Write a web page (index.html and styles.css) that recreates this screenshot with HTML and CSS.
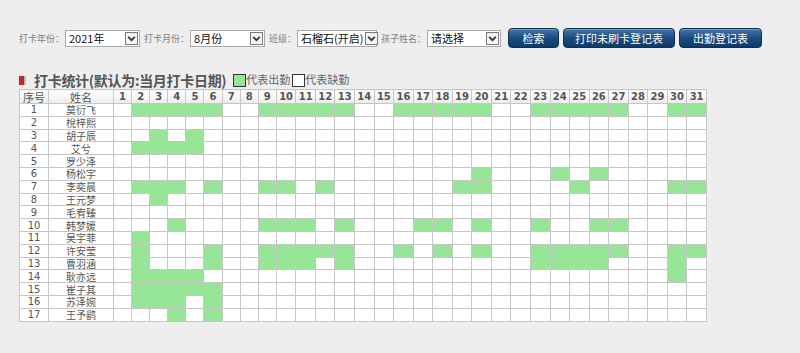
FILE: index.html
```html
<!DOCTYPE html>
<html lang="zh-CN">
<head>
    <meta charset="UTF-8">
    <title>打卡统计</title>
    <link rel="stylesheet" href="styles.css">
</head>
<body>
    <!-- 查询条件 -->
    <div class="toolbar">
        <span class="label">打卡年份：</span>
        <div class="select w-year"><span>2021年</span><i class="arrow"><svg viewBox="0 0 10 10"><path d="M2 3.5 L5 6.5 L8 3.5" /></svg></i></div>
        <span class="label">打卡月份：</span>
        <div class="select w-month"><span>8月份</span><i class="arrow"><svg viewBox="0 0 10 10"><path d="M2 3.5 L5 6.5 L8 3.5" /></svg></i></div>
        <span class="label">班级：</span>
        <div class="select w-class"><span>石榴石(开启)</span><i class="arrow"><svg viewBox="0 0 10 10"><path d="M2 3.5 L5 6.5 L8 3.5" /></svg></i></div>
        <span class="label">孩子姓名：</span>
        <div class="select w-child"><span>请选择</span><i class="arrow"><svg viewBox="0 0 10 10"><path d="M2 3.5 L5 6.5 L8 3.5" /></svg></i></div>
        <button class="btn btn-search">检索</button>
        <button class="btn btn-print">打印未刷卡登记表</button>
        <button class="btn btn-attend">出勤登记表</button>
    </div>

    <!-- 标题与图例 -->
    <div class="title-row">
        <span class="title-mark"></span>
        <h3>打卡统计(默认为:当月打卡日期)</h3>
        <span class="legend"><i class="box on"></i>代表出勤</span>
        <span class="legend"><i class="box"></i>代表缺勤</span>
    </div>

    <table class="stat">
        <colgroup id="cols"></colgroup>
        <thead><tr id="head"></tr></thead>
        <tbody id="rows"></tbody>
    </table>

    <script>
        var kids = [
            ["莫衍飞", [2,3,4,5,6,9,10,11,12,13,16,17,18,19,20,23,24,25,26,27,30,31]],
            ["梲梓熙", []],
            ["胡子辰", [3,5]],
            ["艾兮", [2,3,4,5]],
            ["罗少泽", []],
            ["杨松宇", [20,24,26]],
            ["李奕晨", [2,3,4,6,9,10,12,19,20,25,30,31]],
            ["王元梦", [3]],
            ["毛宥臻", []],
            ["韩梦媛", [4,9,10,11,13,17,18,20,23,26,27]],
            ["吴宇菲", [2]],
            ["许安莹", [2,6,9,10,11,12,13,16,18,20,23,24,25,26,27,30,31]],
            ["曹羽涵", [2,6,9,10,11,13,23,24,25,26,30]],
            ["耿亦远", [2,3,4,5,30]],
            ["崔子其", [2,3,4,5,6]],
            ["苏泽婉", [2,3,4,6]],
            ["王予鹞", [4,6]]
        ];

        var cols = '<col style="width:29px"><col style="width:65px">';
        var head = '<th class="plain">序号</th><th class="plain">姓名</th>';
        for (var d = 1; d <= 31; d++) {
            cols += '<col style="width:' + (d < 10 ? 18.1 : 19.55) + 'px">';
            head += '<th>' + d + '</th>';
        }
        document.getElementById("cols").innerHTML = cols;
        document.getElementById("head").innerHTML = head;

        var html = "";
        kids.forEach(function (k, i) {
            html += '<tr><td class="num">' + (i + 1) + '</td><td class="name">' + k[0] + '</td>';
            for (var d = 1; d <= 31; d++) {
                html += k[1].indexOf(d) >= 0 ? '<td class="on"></td>' : '<td></td>';
            }
            html += '</tr>';
        });
        document.getElementById("rows").innerHTML = html;
    </script>
</body>
</html>
```

FILE: styles.css
```css
/* 页面 */
body {
    margin: 0;
    background: #eeeeee;
    font-family: "Noto Sans CJK SC", sans-serif;
    color: #555;
}

/* 查询条件 */
.toolbar {
    display: flex;
    align-items: center;
    padding: 28px 0 0 19px;
    height: 20px;
}

.label {
    font-size: 9px;
    color: #808080;
    margin-right: 1px;
    white-space: nowrap;
}

.select {
    display: flex;
    align-items: center;
    justify-content: space-between;
    height: 17px;
    box-sizing: border-box;
    border: 1px solid #a9a9a9;
    background: #fff;
    margin-right: 4px;
    padding-left: 3px;
}

.select span {
    font-size: 11px;
    color: #111;
    white-space: nowrap;
}

.select .arrow {
    width: 13px;
    height: 13px;
    box-sizing: border-box;
    border: 1px solid #7a7a7a;
    margin-right: 1px;
    background: #f4f4f4;
    display: flex;
}

.select .arrow svg {
    width: 11px;
    height: 11px;
    fill: none;
    stroke: #333;
    stroke-width: 1.6;
}

.w-year { width: 75px; }
.w-month { width: 75px; }
.w-class { width: 80px; }
.w-child { width: 74px; }
.w-class span { margin-right: 2px; }

.btn {
    height: 20px;
    padding: 0;
    margin-left: 4px;
    border: 1px solid #0b2f55;
    border-radius: 4px;
    background: linear-gradient(#4677ab, #1b4c80 50%, #0e3a68);
    color: #fff;
    font-family: "Noto Sans CJK SC", sans-serif;
    font-size: 11px;
    box-shadow: inset 0 1px 0 rgba(255, 255, 255, 0.3);
}

.btn-search { width: 51px; margin-left: 3px; }
.btn-print { width: 112px; }
.btn-attend { width: 83px; }

/* 标题 */
.title-row {
    display: flex;
    align-items: center;
    margin: 23px 0 0 19px;
    height: 18px;
}

.title-mark {
    width: 5px;
    height: 9px;
    background: #c0272d;
    border-right: 2px solid #bbb;
    margin-right: 8px;
}

.title-row h3 {
    margin: 0 7px 0 0;
    font-size: 14px;
    font-weight: bold;
    color: #555;
    letter-spacing: -0.3px;
}

.legend {
    display: flex;
    align-items: flex-end;
    font-size: 11px;
    color: #666;
    margin-right: 2px;
    height: 14px;
}

.legend .box {
    width: 13px;
    height: 13px;
    box-sizing: border-box;
    border: 1px solid #333;
    background: #fff;
}

.legend .box.on {
    background: #97e597;
}

/* 统计表 */
.stat {
    margin-left: 19px;
    border-collapse: collapse;
    table-layout: fixed;
    width: 687px;
    font-size: 11px;
}

.stat th,
.stat td {
    border: 1px solid #c6c6c6;
    padding: 0;
    text-align: center;
    overflow: hidden;
    white-space: nowrap;
}

.stat th {
    height: 13px;
    line-height: 12px;
    background: linear-gradient(#ffffff, #ececec);
    font-family: "DejaVu Sans", sans-serif;
    font-weight: bold;
    font-size: 10px;
    color: #555;
}

.stat th.plain {
    font-family: "Noto Sans CJK SC", sans-serif;
    font-weight: normal;
    font-size: 11px;
}

.stat td {
    height: 11.8px;
    line-height: 11px;
    background: #fff;
}

.stat td.num {
    font-family: "DejaVu Sans", sans-serif;
    font-size: 10px;
}

.stat td.name {
    font-size: 10px;
}

.stat td.on {
    background: #97e597;
}
```
